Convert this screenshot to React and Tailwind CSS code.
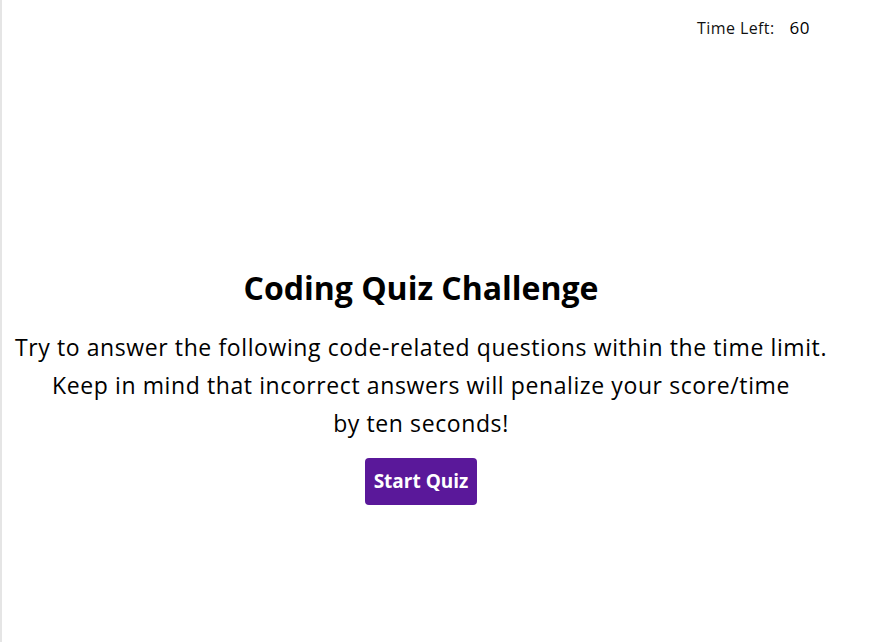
export default function App() {
  return (
    <div className="h-screen w-full bg-white border-l-2 border-[#e5e5e5] font-['Open_Sans',sans-serif] text-black">
      <header className="flex justify-end items-center pt-[15px] pr-[62px]">
        <span className="text-[16px] tracking-[0.4px] text-[#111]">Time Left:</span>
        <span className="ml-[15px] text-[17px] font-medium tracking-[0.5px]">60</span>
      </header>

      <main className="w-[838px] flex flex-col items-center text-center mt-[226px]">
        <h1 className="text-[32px] font-bold leading-[42px]">Coding Quiz Challenge</h1>
        <p className="mt-[19px] text-[23px] tracking-[0.6px] leading-[38px]">
          Try to answer the following code-related questions within the time limit.
          <br />
          Keep in mind that incorrect answers will penalize your score/time
          <br />
          by ten seconds!
        </p>
        <button className="mt-[16px] h-[47px] px-[9px] rounded-[4px] bg-[#5a189a] text-white text-[19px] font-bold">
          Start Quiz
        </button>
      </main>
    </div>
  );
}
